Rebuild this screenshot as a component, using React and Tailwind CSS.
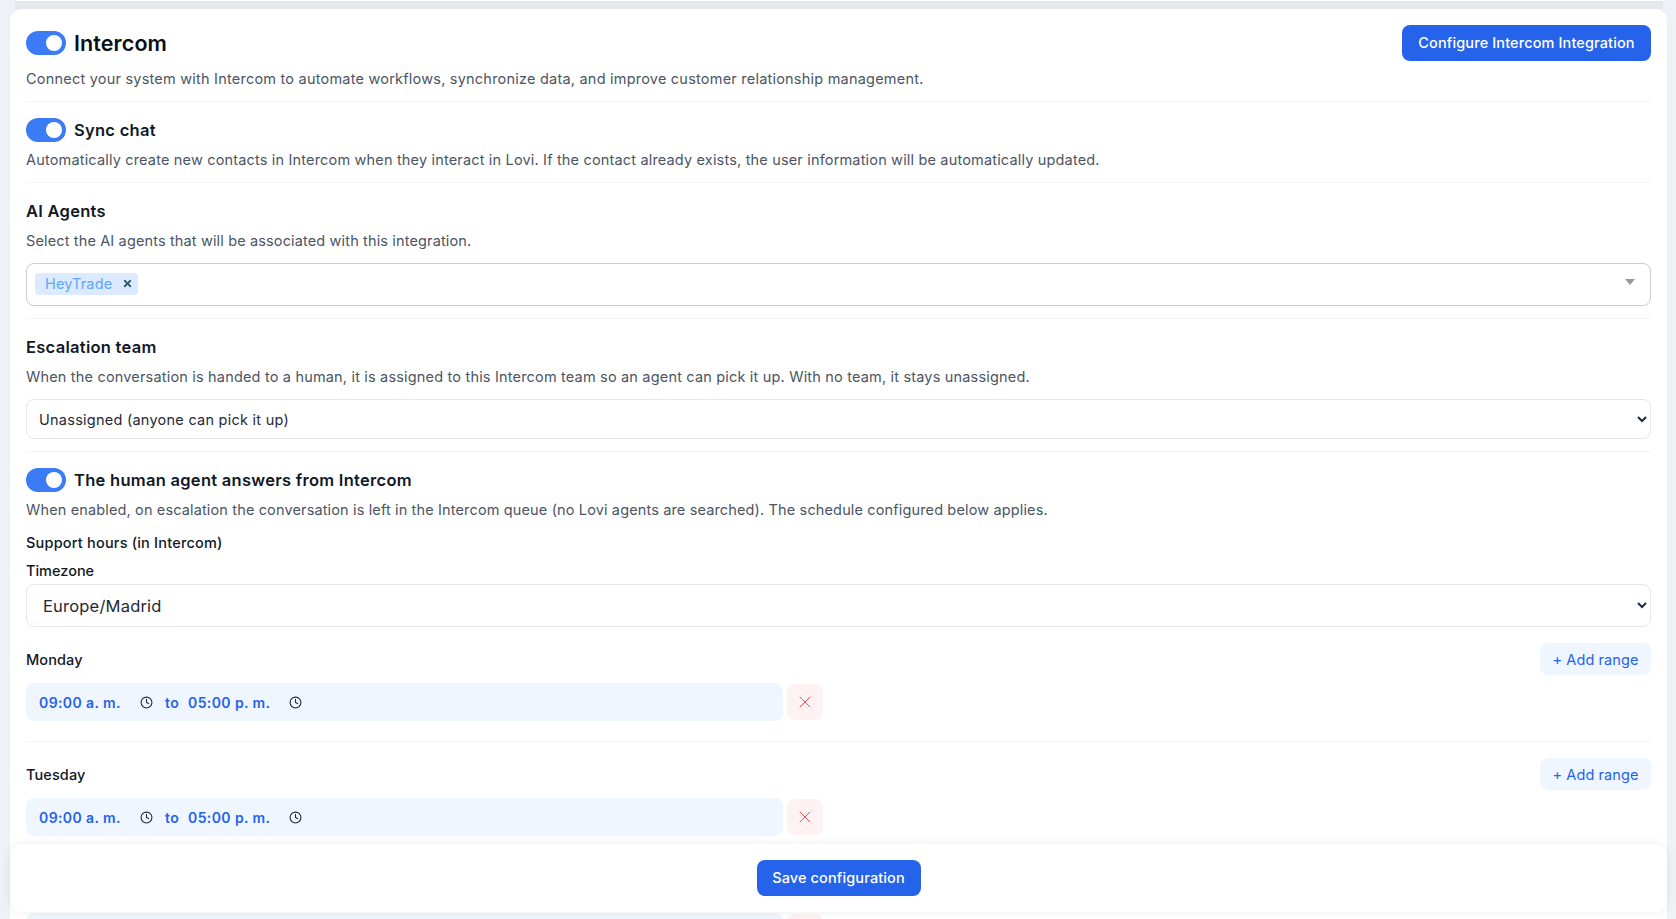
import React from "react";
import { Clock, X } from "lucide-react";

const Toggle = () => {
  return (
    <div className="flex h-6 w-10 shrink-0 items-center justify-end rounded-full bg-[#3b7bf6] pr-1">
      <div className="h-4 w-4 rounded-full bg-white" />
    </div>
  );
};

const Desc = ({ children, className = "tracking-[0.17px]" }) => {
  return (
    <p className={`text-[14.5px] leading-[22px] text-[#4b5563] ${className}`}>
      {children}
    </p>
  );
};

const Heading = ({ children, className = "leading-[26px]" }) => {
  return (
    <h3 className={`h-6 text-[16.5px] font-semibold tracking-[0.28px] text-[#111827] ${className}`}>
      {children}
    </h3>
  );
};

const Range = () => {
  return (
    <div className="mt-2 flex items-center gap-1">
      <div className="flex h-[38px] w-[757px] items-center rounded-lg bg-[#eff6ff] pl-[13px] text-[14px] font-semibold tracking-[0.4px] text-[#2563eb]">
        <span className="w-[101px]">09:00 a. m.</span>
        <Clock size={13} strokeWidth={2} className="text-[#1f2937]" />
        <span className="ml-3 w-[23px]">to</span>
        <span className="w-[101px]">05:00 p. m.</span>
        <Clock size={13} strokeWidth={2} className="text-[#1f2937]" />
      </div>
      <button className="flex h-9 w-9 items-center justify-center rounded-lg bg-[#fef2f2] text-[#ef5350]">
        <X size={20} strokeWidth={1.2} />
      </button>
    </div>
  );
};

const DayHeader = ({ name }) => {
  return (
    <div className="flex h-8 items-center justify-between">
      <span className="pt-[2px] text-[14.5px] font-medium tracking-[0.1px] text-[#111827]">{name}</span>
      <button className="h-8 w-[111px] rounded-lg bg-[#eff6ff] pt-px text-[14.5px] tracking-[0.1px] text-[#2563eb]">
        + Add range
      </button>
    </div>
  );
};

const App = () => {
  return (
    <div className="relative h-[919px] w-full overflow-hidden bg-[#eef1f6] font-['Inter',sans-serif]">
      {/* strip of the card above */}
      <div className="mr-[13px] ml-[15px] h-[9px] border-t border-white bg-[#e5e7eb]" />

      <div className="mr-[9px] ml-[10px] rounded-xl bg-white px-4">
        {/* Intercom header */}
        <div className="border-b border-[#f1f5f9] pt-4 pb-[11px]">
          <div className="flex h-9 items-center justify-between">
            <div className="flex items-center gap-2">
              <Toggle />
              <h2 className="text-[21.5px] font-semibold tracking-[0.1px] text-[#0b0f19]">Intercom</h2>
            </div>
            <button className="h-9 w-[249px] rounded-lg bg-[#2563eb] text-[14.5px] font-medium tracking-[0.12px] text-white">
              Configure Intercom Integration
            </button>
          </div>
          <Desc className="mt-[7px] tracking-[0.215px]">
            Connect your system with Intercom to automate workflows, synchronize data, and improve customer relationship management.
          </Desc>
        </div>

        {/* Sync chat */}
        <div className="border-b border-[#f1f5f9] pt-4 pb-[11px]">
          <div className="flex items-center gap-2">
            <Toggle />
            <Heading className="leading-6">Sync chat</Heading>
          </div>
          <Desc className="mt-[7px] tracking-[0.17px]">
            Automatically create new contacts in Intercom when they interact in Lovi. If the contact already exists, the user information will be automatically updated.
          </Desc>
        </div>

        {/* AI agents */}
        <div className="border-b border-[#f1f5f9] pt-[15px] pb-3">
          <Heading>AI Agents</Heading>
          <Desc className="mt-2 tracking-[0.14px]">Select the AI agents that will be associated with this integration.</Desc>
          <div className="mt-[11px] flex h-[43px] items-center justify-between rounded-lg border border-[#cccccc] pr-[15px] pl-2">
            <div className="mb-[2px] flex h-[22px] w-[103px] items-center gap-[10px] rounded bg-[#dbeafe] pl-[10px]">
              <span className="text-[14.5px] tracking-[0.15px] text-[#60a5fa]">HeyTrade</span>
              <X size={11} strokeWidth={4} className="text-[#2f5f6b]" />
            </div>
            <div className="mb-[6px] h-0 w-0 border-x-[5px] border-t-[6px] border-x-transparent border-t-[#999999]" />
          </div>
        </div>

        {/* Escalation team */}
        <div className="border-b border-[#f1f5f9] pt-[15px] pb-3">
          <Heading>Escalation team</Heading>
          <Desc className="mt-2 tracking-[0.18px]">
            When the conversation is handed to a human, it is assigned to this Intercom team so an agent can pick it up. With no team, it stays unassigned.
          </Desc>
          <select className="mt-[11px] h-10 w-full rounded-lg border border-[#e5e7eb] bg-white pl-2 text-[14.5px] tracking-[0.25px] text-[#1f2937]">
            <option>Unassigned (anyone can pick it up)</option>
          </select>
        </div>

        {/* Human agent + schedule */}
        <div className="border-b border-[#f1f5f9] pt-4 pb-5">
          <div className="flex items-center gap-2">
            <Toggle />
            <Heading className="leading-6">The human agent answers from Intercom</Heading>
          </div>
          <Desc className="mt-[7px] tracking-[0.14px]">
            When enabled, on escalation the conversation is left in the Intercom queue (no Lovi agents are searched). The schedule configured below applies.
          </Desc>
          <p className="mt-[10px] h-[22px] text-[14.5px] leading-6 font-medium tracking-[0.2px] text-[#111827]">Support hours (in Intercom)</p>
          <p className="mt-[6px] h-[22px] text-[14.5px] leading-6 font-medium text-[#111827]">Timezone</p>
          <select className="mt-[3px] h-[43px] w-full rounded-lg border border-[#e5e7eb] bg-white pl-3 text-[16.5px] tracking-[0.2px] text-[#1f2937]">
            <option>Europe/Madrid</option>
          </select>
          <div className="mt-4">
            <DayHeader name="Monday" />
          </div>
          <Range />
        </div>

        <div className="border-b border-[#f1f5f9] pt-4 pb-5">
          <DayHeader name="Tuesday" />
          <Range />
        </div>

        {/* next day, only its row peeks out under the save bar */}
        <div className="flex items-center gap-1 pt-14">
          <div className="h-[38px] w-[757px] rounded-lg bg-[#eff6ff]" />
          <div className="h-9 w-9 rounded-lg bg-[#fef2f2]" />
        </div>
      </div>

      {/* sticky save bar */}
      <div className="absolute top-[844px] right-[9px] left-[10px] flex h-[68px] items-center justify-center rounded-xl bg-white shadow-[0_0_10px_rgba(0,0,0,0.08)]">
        <button className="h-9 w-[164px] rounded-lg bg-[#2563eb] text-[14.5px] font-medium tracking-[0.12px] text-white">
          Save configuration
        </button>
      </div>
    </div>
  );
};

export default App;
